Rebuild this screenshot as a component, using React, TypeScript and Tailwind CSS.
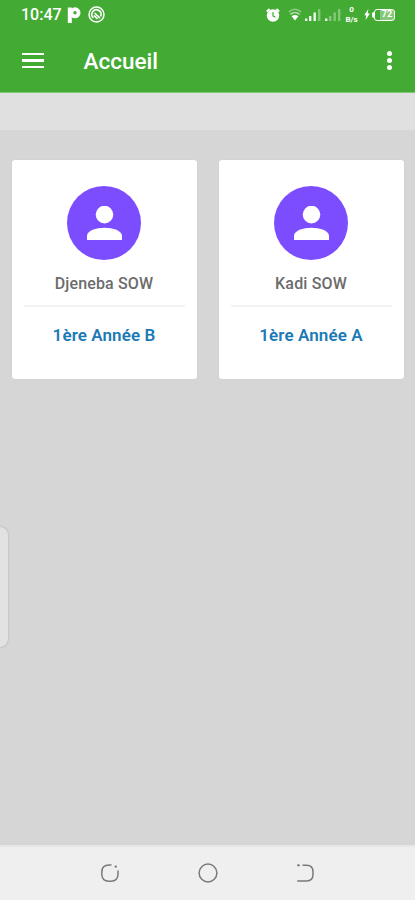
import { ReactNode } from "react";

type Student = {
  id: number;
  name: string;
  grade: string;
};

const students: Student[] = [
  { id: 1, name: "Djeneba SOW", grade: "1ère Année B" },
  { id: 2, name: "Kadi SOW", grade: "1ère Année A" },
];

function SignalIcon({ strength }: { strength: number }) {
  const bars = [
    { x: 0, h: 2.5 },
    { x: 4, h: 5 },
    { x: 8.5, h: 8.5 },
    { x: 13, h: 12 },
  ];
  return (
    <svg className="h-3 w-4" viewBox="0 0 16 12" fill="white">
      {bars.map((bar, i) => (
        <rect key={bar.x} x={bar.x} y={12 - bar.h} width="2.4" height={bar.h} opacity={i < strength ? 0.9 : 0.35} />
      ))}
    </svg>
  );
}

function StatusBar() {
  return (
    <div className="flex h-[29px] items-center pr-[20px] pl-[21px] text-white">
      <span className="w-[46px] pt-px text-[16px] leading-none font-medium">10:47</span>
      <svg className="h-4 w-[14px]" viewBox="0 0 14 16" fill="none" stroke="white">
        <path d="M2.8 0.5V16" strokeWidth="4" />
        <circle cx="8" cy="5.8" r="3.6" strokeWidth="3.8" />
      </svg>
      <svg className="ml-[7px] h-[17px] w-[17px]" viewBox="0 0 17 17" fill="none" stroke="white">
        <circle cx="8.5" cy="8.5" r="7.5" strokeWidth="1.5" />
        <path d="M5.4 11.9A4.6 4.6 0 1 1 12.6 10.4" strokeWidth="1.6" />
        <path d="M6.6 7l5.4 5.2M5.9 9.4l3.6 3.4" strokeWidth="1.6" />
      </svg>

      <div className="ml-auto flex items-center">
        <svg className="h-[14px] w-[14px]" viewBox="0 0 14 14">
          <circle cx="7" cy="7.5" r="6.2" fill="white" />
          <path d="M0.8 3.4L3.6 1M13.2 3.4L10.4 1" stroke="white" strokeWidth="2" />
          <path d="M7 4v3.8l2.4 1.4" stroke="#43ab34" strokeWidth="1.2" fill="none" />
        </svg>
        <svg className="ml-2 h-[13px] w-[14px]" viewBox="0 0 14 13" fill="none" stroke="white">
          <path d="M0.8 4Q7-1.5 13.2 4" strokeWidth="1.5" opacity="0.4" />
          <path d="M2.4 6.3Q7 2.6 11.6 6.3" strokeWidth="1.5" opacity="0.6" />
          <path d="M3.6 8.2Q7 5.6 10.4 8.2L7 12.4Z" fill="white" stroke="none" />
        </svg>
        <div className="ml-[3px]">
          <SignalIcon strength={3} />
        </div>
        <div className="ml-1">
          <SignalIcon strength={1} />
        </div>
        <div className="ml-[3px] flex w-[15px] flex-col items-center text-[8px] leading-[10px] font-bold">
          <span>0</span>
          <span>B/s</span>
        </div>
        <svg className="ml-[5px] h-[11px] w-[6px]" viewBox="0 0 6 11" fill="white">
          <path d="M4.4 0L0.2 6.2h2L1.6 11 5.9 4.4H3.7Z" />
        </svg>
        <div className="ml-[2px] flex items-center">
          <span className="h-[6px] w-[2px] rounded-l-sm bg-white" />
          <span className="flex h-[12px] w-[21px] items-center justify-end rounded-[3px] border-[1.5px] border-white">
            <span className="flex h-full w-[14px] items-center justify-center bg-white/35 text-[9px] leading-none font-bold">72</span>
          </span>
        </div>
      </div>
    </div>
  );
}

function AppBar({ title }: { title: string }) {
  return (
    <header className="h-[93px] shrink-0 border-b border-[#82c576] bg-[#43ab34]">
      <StatusBar />
      <div className="flex h-[63px] items-center pr-[23px] pl-[22px] text-white">
        <button type="button" aria-label="Menu" className="flex w-[22px] flex-col gap-[4px]">
          <span className="h-[2.5px] bg-white" />
          <span className="h-[2.5px] bg-white" />
          <span className="h-[2.5px] bg-white" />
        </button>
        <h1 className="ml-[39.5px] pt-[2px] text-[22.5px] leading-none font-medium">{title}</h1>
        <button type="button" aria-label="Options" className="ml-auto flex flex-col gap-[2px]">
          <span className="size-[5px] rounded-full bg-white" />
          <span className="size-[5px] rounded-full bg-white" />
          <span className="size-[5px] rounded-full bg-white" />
        </button>
      </div>
    </header>
  );
}

function StudentCard({ student }: { student: Student }) {
  return (
    <article className="flex h-[219px] flex-col items-center rounded-[3px] bg-white px-3 pt-[26px] shadow-[0_0_2px_rgba(0,0,0,0.06)]">
      <div className="flex size-[74px] shrink-0 items-center justify-center rounded-full bg-[#7c4dff]">
        <svg className="h-[35px] w-[35px]" viewBox="0 0 35 35" fill="white">
          <circle cx="17.5" cy="8.6" r="8.8" />
          <path d="M0 34V30C0 24.5 9 21.7 17.5 21.7S35 24.5 35 30v4Z" />
        </svg>
      </div>
      <p className="mt-[14px] text-[16px] leading-5 font-medium tracking-[0.15px] text-[#6c6c6c]">{student.name}</p>
      <hr className="mt-[11px] w-full border-t-2 border-[#f3f3f3]" />
      <p className="mt-[18px] text-[17px] leading-5 font-semibold tracking-[0.1px] text-[#1b7ab5]">{student.grade}</p>
    </article>
  );
}

function NavButton({ label, children }: { label: string; children: ReactNode }) {
  return (
    <button type="button" aria-label={label} className="flex w-[98px] justify-center">
      <svg className="size-5" viewBox="0 0 20 20" fill="none" stroke="#7a7a7a" strokeWidth="1.5">
        {children}
      </svg>
    </button>
  );
}

function NavigationBar() {
  return (
    <nav className="flex h-[55px] shrink-0 items-center justify-center border-t-2 border-[#e6e6e6] bg-[#efefef] pb-[2px]">
      <NavButton label="Recents">
        <path d="M11.5 2H9Q1.8 2 1.8 9.2v1.8q0 7.2 7.2 7.2h1.8q7.2 0 7.2-7.2V7.5" />
        <path d="M14.6 3.6h2.2" strokeWidth="2" />
      </NavButton>
      <NavButton label="Home">
        <circle cx="10" cy="10" r="8.9" />
      </NavButton>
      <NavButton label="Back">
        <path d="M6.5 2.3H10.5Q17 2.3 17 9v2.2q0 6.7-6.5 6.7H1.2" />
        <path d="M1.2 2.3h2.5" strokeWidth="2" />
      </NavButton>
    </nav>
  );
}

export default function App() {
  return (
    <div className="relative flex h-[900px] w-[415px] flex-col overflow-hidden bg-[#d6d6d6] font-['Roboto',sans-serif]">
      <AppBar title="Accueil" />
      <div className="h-[37px] shrink-0 bg-[#e0e0e0]" />
      <main className="grid flex-1 grid-cols-2 content-start gap-[22px] px-[11.5px] pt-[30px]">
        {students.map((student) => (
          <StudentCard key={student.id} student={student} />
        ))}
      </main>
      {/* Edge panel handle, floats over the page */}
      <div className="absolute top-[527px] left-0 h-[120px] w-2 rounded-r-lg bg-[#e2e2e2] shadow-[0_0_2px_rgba(0,0,0,0.25)]" />
      <NavigationBar />
    </div>
  );
}
